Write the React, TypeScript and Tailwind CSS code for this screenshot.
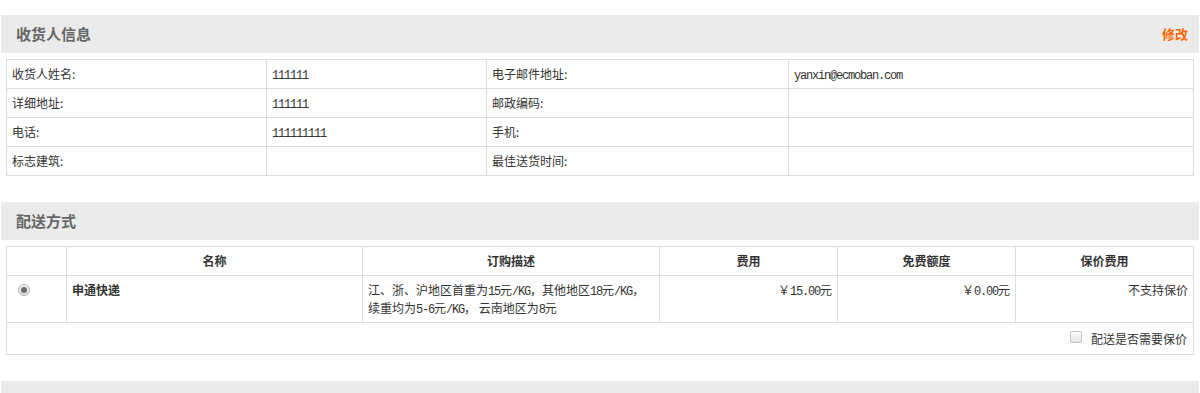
import React from "react";

const M = ({ children }: { children: React.ReactNode }) => (
  <span className="font-['Liberation_Mono','Noto_Sans_CJK_SC',monospace] text-[12px] leading-[0] tracking-[-1.2px]">
    {children}
  </span>
);

const SectionHeader = ({ title, action }: { title: string; action?: string }) => (
  <div className="mx-px flex h-[38px] items-center justify-between bg-[#ebebeb] pl-[15px] pr-[11px]">
    <h3 className="text-[15px] font-bold text-[#666]">{title}</h3>
    {action && <a className="cursor-pointer text-[13px] font-bold text-[#ff6600]">{action}</a>}
  </div>
);

const consignee = [
  ["收货人姓名:", "111111", "电子邮件地址:", "yanxin@ecmoban.com"],
  ["详细地址:", "111111", "邮政编码:", ""],
  ["电话:", "111111111", "手机:", ""],
  ["标志建筑:", "", "最佳送货时间:", ""],
];

const td = "border border-[#ddd] px-[5px] py-[5px] leading-[18px]";

export default function App() {
  return (
    <div className="h-[393px] overflow-hidden bg-white pt-[15px] font-['Noto_Sans_CJK_SC',sans-serif] text-[12px] text-[#333]">
      {/* 收货人信息 */}
      <SectionHeader title="收货人信息" action="修改" />
      <div className="mx-[6px] mt-[6px]">
        <table className="w-full table-fixed border-collapse">
          <colgroup>
            <col className="w-[260px]" />
            <col className="w-[220px]" />
            <col className="w-[302px]" />
            <col />
          </colgroup>
          <tbody>
            {consignee.map((row) => (
              <tr key={row[0]}>
                <td className={td}>{row[0]}</td>
                <td className={td}>{row[1] && <M>{row[1]}</M>}</td>
                <td className={td}>{row[2]}</td>
                <td className={td}>{row[3] && <M>{row[3]}</M>}</td>
              </tr>
            ))}
          </tbody>
        </table>
      </div>

      {/* 配送方式 */}
      <div className="mt-[26px]">
        <SectionHeader title="配送方式" />
      </div>
      <div className="mx-[6px] mt-[6px]">
        <table className="w-full table-fixed border-collapse">
          <colgroup>
            <col className="w-[60px]" />
            <col className="w-[296px]" />
            <col className="w-[297px]" />
            <col className="w-[178px]" />
            <col className="w-[178px]" />
            <col />
          </colgroup>
          <thead>
            <tr>
              <th className={td}>&nbsp;</th>
              <th className={`${td} text-center font-bold`}>名称</th>
              <th className={`${td} text-center font-bold`}>订购描述</th>
              <th className={`${td} text-center font-bold`}>费用</th>
              <th className={`${td} text-center font-bold`}>免费额度</th>
              <th className={`${td} text-center font-bold`}>保价费用</th>
            </tr>
          </thead>
          <tbody>
            <tr className="align-top">
              <td className={`${td} pl-[11px]`}>
                <span className="mt-[3px] flex h-[12px] w-[12px] items-center justify-center rounded-full border border-[#b5b5b5] bg-gradient-to-b from-[#f4f4f4] to-[#dcdcdc]">
                  <span className="h-[6px] w-[6px] rounded-full bg-[#6b6b6b]" />
                </span>
              </td>
              <td className={`${td} font-bold`}>申通快递</td>
              <td className={td}>
                江、浙、沪地区首重为<M>15</M>元<M>/KG</M>，其他地区<M>18</M>元<M>/KG</M>，
                <br />
                续重均为<M>5-6</M>元<M>/KG</M>， 云南地区为<M>8</M>元
              </td>
              <td className={`${td} text-right`}>
                ￥<M>15.00</M>元
              </td>
              <td className={`${td} text-right`}>
                ￥<M>0.00</M>元
              </td>
              <td className={`${td} text-right`}>不支持保价</td>
            </tr>
            <tr>
              <td colSpan={6} className="h-[32px] border border-[#ddd] px-[6px] text-right">
                <label className="inline-flex items-center gap-[9px]">
                  <span className="-mt-[4px] inline-block h-[12px] w-[12px] rounded-[2px] border border-[#c4c4c4] bg-gradient-to-b from-[#fbfbfb] to-[#e6e6e6]" />
                  <span>配送是否需要保价</span>
                </label>
              </td>
            </tr>
          </tbody>
        </table>
      </div>

      {/* next section */}
      <div className="mx-px mt-[26px] h-[38px] bg-[#ebebeb]" />
    </div>
  );
}
